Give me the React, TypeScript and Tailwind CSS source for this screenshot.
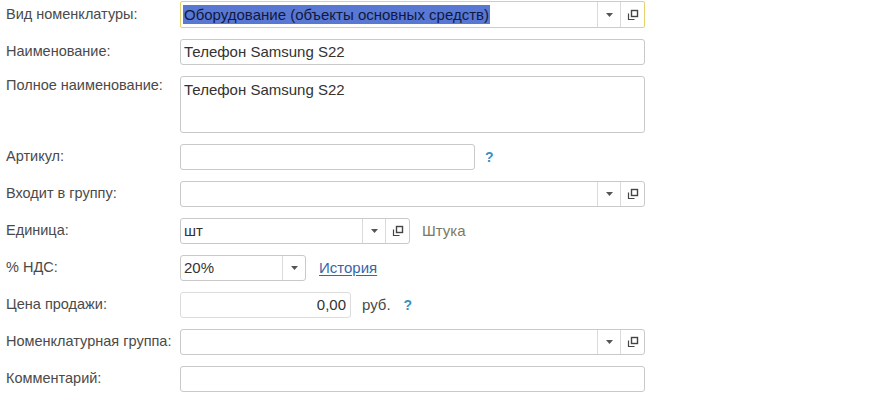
import React from 'react';

const font = { fontFamily: '"Liberation Sans", Arial, sans-serif' };

function Arrow() {
  return (
    <div className="w-[23px] h-full flex items-center justify-center border-l border-[#dadada]">
      <svg width="7" height="4" viewBox="0 0 7 4">
        <path d="M0 0 L7 0 L3.5 4 Z" fill="#555" />
      </svg>
    </div>
  );
}

function OpenBtn() {
  return (
    <div className="w-[24px] h-full flex items-center justify-center border-l border-[#dadada]">
      <svg width="12" height="12" viewBox="0 0 12 12" fill="none">
        <path d="M1.5 4.5 V10.5 H7.5" stroke="#444" strokeWidth="1.2" />
        <rect x="4.5" y="1.5" width="6" height="6" stroke="#444" strokeWidth="1.4" fill="#fff" />
      </svg>
    </div>
  );
}

function Label({ children, top }: { children: React.ReactNode; top?: boolean }) {
  return (
    <div className={`w-[174px] shrink-0 text-[14.5px] text-[#4a4a4a] ${top ? 'leading-[18px]' : 'flex items-center'}`}>
      {children}
    </div>
  );
}

function Box({ w, children, arrow, open, right }: { w: string; children?: React.ReactNode; arrow?: boolean; open?: boolean; right?: boolean }) {
  return (
    <div className={`${w} h-[26px] flex items-stretch border border-[#c9c9c9] rounded-[3px] bg-white`}>
      <div className={`flex-1 flex items-center px-[3px] text-[15px] text-[#333] ${right ? 'justify-end' : ''}`}>{children}</div>
      {arrow && <Arrow />}
      {open && <OpenBtn />}
    </div>
  );
}

export default function App() {
  return (
    <div className="w-[870px] h-[400px] bg-white overflow-hidden pl-[6px]" style={font}>
      <div className="flex flex-col gap-[11px] pt-[1px]">
        {/* Вид номенклатуры */}
        <div className="flex h-[27px]">
          <Label>Вид номенклатуры:</Label>
          <div className="w-[465px] h-[27px] flex items-stretch border border-[#e4d271] rounded-[2px] bg-white">
            <div className="flex-1 flex items-center px-[2px] text-[15px]">
              <span className="bg-[#5878d4] text-[#10183e] leading-[19px] px-[1px]">Оборудование (объекты основных средств)</span>
            </div>
            <Arrow />
            <OpenBtn />
          </div>
        </div>

        {/* Наименование */}
        <div className="flex h-[26px]">
          <Label>Наименование:</Label>
          <Box w="w-[465px]">Телефон Samsung S22</Box>
        </div>

        {/* Полное наименование */}
        <div className="flex h-[57px]">
          <Label top>Полное наименование:</Label>
          <div className="w-[465px] h-[57px] border border-[#c9c9c9] rounded-[3px] px-[3px] pt-[2px] text-[15px] text-[#333]">
            Телефон Samsung S22
          </div>
        </div>

        {/* Артикул */}
        <div className="flex h-[26px]">
          <Label>Артикул:</Label>
          <Box w="w-[295px]" />
          <span className="ml-[10px] flex items-center text-[14px] font-bold text-[#3b8fc0]">?</span>
        </div>

        {/* Входит в группу */}
        <div className="flex h-[26px]">
          <Label>Входит в группу:</Label>
          <Box w="w-[465px]" arrow open />
        </div>

        {/* Единица */}
        <div className="flex h-[26px]">
          <Label>Единица:</Label>
          <Box w="w-[230px]" arrow open>шт</Box>
          <span className="ml-[12px] flex items-center text-[15px] text-[#7c7a5c]">Штука</span>
        </div>

        {/* НДС */}
        <div className="flex h-[26px]">
          <Label>% НДС:</Label>
          <Box w="w-[126px]" arrow>20%</Box>
          <span className="ml-[13px] flex items-center text-[15px] text-[#3567a8] underline underline-offset-2">История</span>
        </div>

        {/* Цена продажи */}
        <div className="flex h-[26px]">
          <Label>Цена продажи:</Label>
          <div className="w-[171px] h-[26px] flex items-center justify-end border border-[#dcdcdc] rounded-[3px] px-[4px] text-[15px] text-[#333]">0,00</div>
          <span className="ml-[11px] flex items-center text-[15px] text-[#4a4a4a]">руб.</span>
          <span className="ml-[13px] flex items-center text-[14px] font-bold text-[#3b8fc0]">?</span>
        </div>

        {/* Номенклатурная группа */}
        <div className="flex h-[26px]">
          <Label>Номенклатурная группа:</Label>
          <Box w="w-[465px]" arrow open />
        </div>

        {/* Комментарий */}
        <div className="flex h-[26px]">
          <Label>Комментарий:</Label>
          <Box w="w-[465px]" />
        </div>
      </div>
    </div>
  );
}
